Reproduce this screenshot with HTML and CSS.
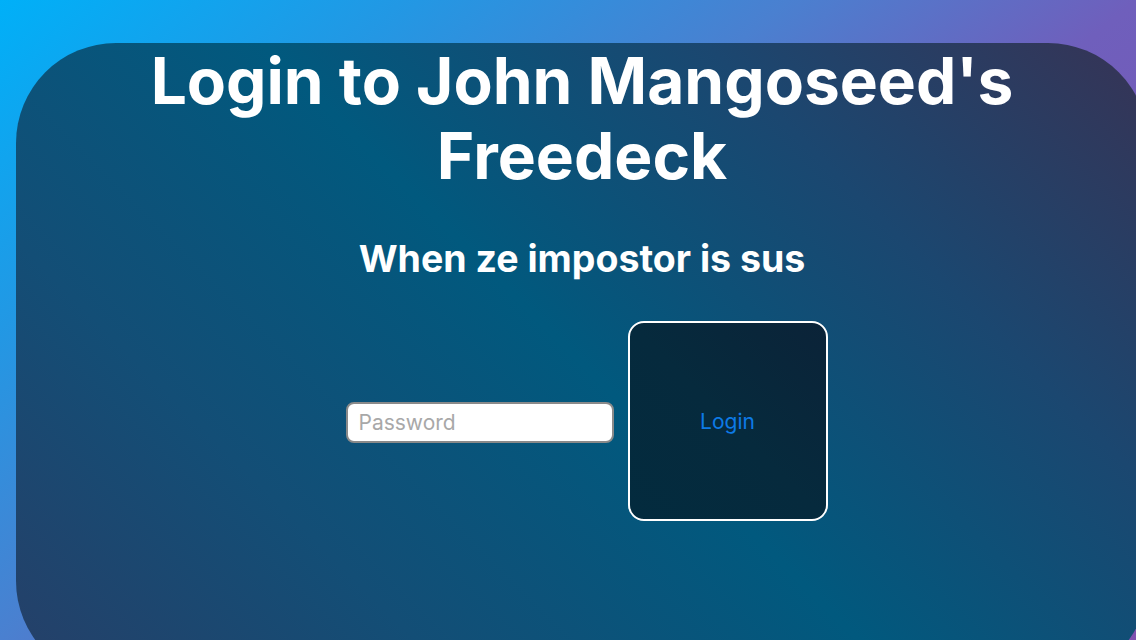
FILE: index.html
```html
<!DOCTYPE html>
<html lang="en">
<head>
<meta charset="utf-8">
<title>Freedeck Login</title>
<link rel="stylesheet" href="styles.css">
</head>
<body>
  <main class="card">
    <h1 class="title">Login to John Mangoseed's<br>Freedeck</h1>
    <h2 class="subtitle">When ze impostor is sus</h2>
    <form class="login-row">
      <input class="password" type="password" placeholder="Password">
      <button class="login-btn" type="button">Login</button>
    </form>
  </main>
</body>
</html>
```
FILE: styles.css
```css
html, body {
  margin: 0;
  padding: 0;
  width: 1136px;
  height: 640px;
  overflow: hidden;
}

body {
  background: linear-gradient(141deg, #00b0f8 0%, #2298e4 21%, #4a80d0 41%, #6f5fbc 59%, #8050b0 100%);
  font-family: Inter, "Noto Sans", sans-serif;
}

.card {
  margin: 43px 0 0 16px;
  width: 1132px;
  height: 638px;
  border-radius: 100px;
  background: linear-gradient(45deg, #263f68 0%, #134e76 25%, #01597e 50%, #1b4770 75%, #373355 100%);
  display: flex;
  flex-direction: column;
  align-items: center;
}

.title {
  margin: 0;
  color: #ffffff;
  font-size: 64px;
  font-weight: 700;
  line-height: 75px;
  text-align: center;
}

.subtitle {
  margin: 44px 0 0;
  color: #ffffff;
  font-size: 37.5px;
  font-weight: 700;
  line-height: 44px;
  text-align: center;
}

.login-row {
  margin: 40px 0 0 9px;
  display: flex;
  align-items: center;
  gap: 14px;
}

.password {
  margin-top: 3px;
  width: 268px;
  height: 41px;
  box-sizing: border-box;
  border: 2px solid #8a8a8a;
  border-radius: 8px;
  background: #ffffff;
  padding: 0 11px;
  font-family: Inter, "Noto Sans", sans-serif;
  font-size: 21px;
  outline: none;
}

.password::placeholder {
  color: #a8a8a8;
}

.login-btn {
  width: 200px;
  height: 200px;
  box-sizing: border-box;
  border: 2px solid #ffffff;
  border-radius: 16px;
  background: linear-gradient(45deg, #032b3e 0%, #062a3d 50%, #0b2338 100%);
  color: #0d7ae6;
  font-family: Inter, "Noto Sans", sans-serif;
  font-size: 21px;
  cursor: pointer;
}
```
